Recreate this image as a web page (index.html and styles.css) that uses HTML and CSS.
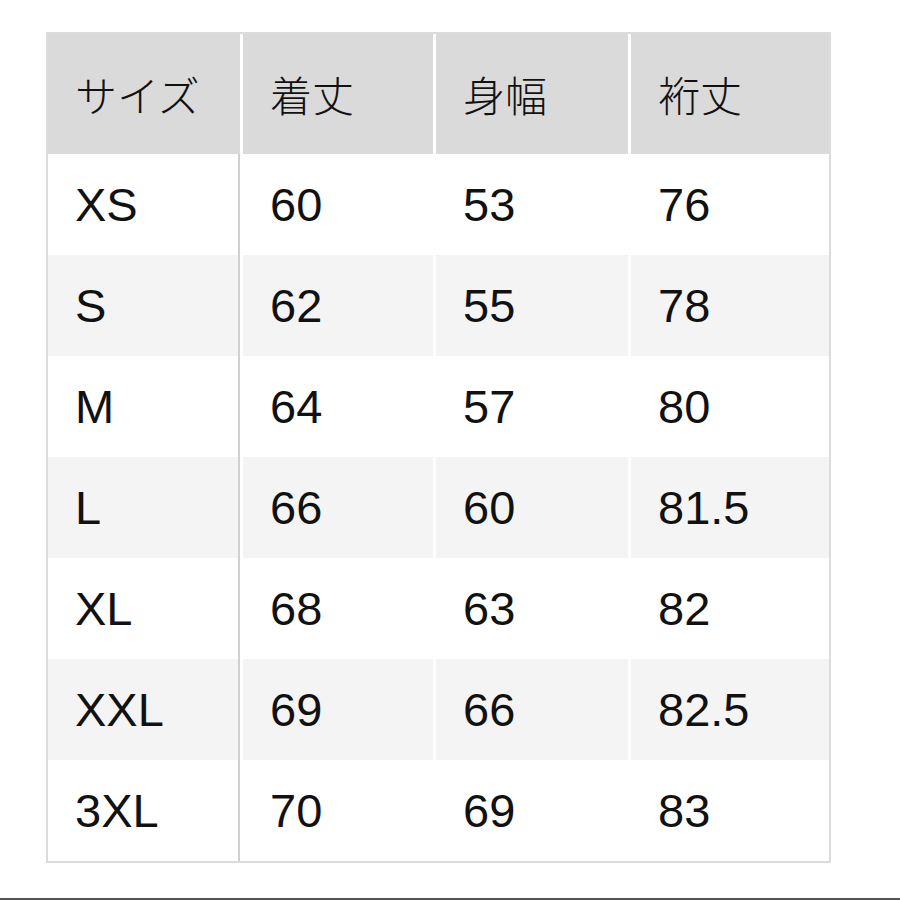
FILE: index.html
```html
<!DOCTYPE html>
<html lang="ja">
<head>
<meta charset="utf-8">
<link rel="stylesheet" href="styles.css">
</head>
<body>
<div class="page">
  <div class="table">
    <div class="row head">
      <div class="cell">サイズ</div>
      <div class="cell">着丈</div>
      <div class="cell">身幅</div>
      <div class="cell">裄丈</div>
    </div>
    <div class="row">
      <div class="cell size">XS</div><div class="cell">60</div><div class="cell">53</div><div class="cell">76</div>
    </div>
    <div class="row alt">
      <div class="cell size">S</div><div class="cell">62</div><div class="cell">55</div><div class="cell">78</div>
    </div>
    <div class="row">
      <div class="cell size">M</div><div class="cell">64</div><div class="cell">57</div><div class="cell">80</div>
    </div>
    <div class="row alt">
      <div class="cell size">L</div><div class="cell">66</div><div class="cell">60</div><div class="cell">81.5</div>
    </div>
    <div class="row">
      <div class="cell size">XL</div><div class="cell">68</div><div class="cell">63</div><div class="cell">82</div>
    </div>
    <div class="row alt">
      <div class="cell size">XXL</div><div class="cell">69</div><div class="cell">66</div><div class="cell">82.5</div>
    </div>
    <div class="row">
      <div class="cell size">3XL</div><div class="cell">70</div><div class="cell">69</div><div class="cell">83</div>
    </div>
  </div>
  <div class="rule"></div>
</div>
</body>
</html>
```

FILE: styles.css
```css
html, body {
  margin: 0;
  padding: 0;
  background: #ffffff;
}
.page {
  width: 900px;
  height: 900px;
  display: flex;
  flex-direction: column;
  padding-top: 32px;
  box-sizing: border-box;
}
.table {
  margin-left: 46px;
  width: 785px;
  border: 2px solid #dcdcdc;
  box-sizing: border-box;
  background: #ffffff;
}
.row {
  display: grid;
  grid-template-columns: 192px 190px 192px 198px;
  column-gap: 3px;
  height: 101px;
  background: #ffffff;
}
.row.head {
  height: 120px;
}
.cell {
  display: flex;
  align-items: center;
  padding-left: 27px;
  box-sizing: border-box;
  font-family: "Liberation Sans", Arial, sans-serif;
  font-size: 47px;
  color: #111111;
}
.head .cell {
  background: #dadada;
  font-family: "Noto Sans CJK JP", "Noto Sans", sans-serif;
  font-size: 42px;
  font-weight: 300;
  padding-bottom: 2px;
}
.alt .cell {
  background: #f4f4f4;
}
.cell.size {
  border-right: 2px solid #d0d0d0;
}
.rule {
  margin-top: auto;
  height: 2px;
  background: #555555;
  width: 100%;
}
```
